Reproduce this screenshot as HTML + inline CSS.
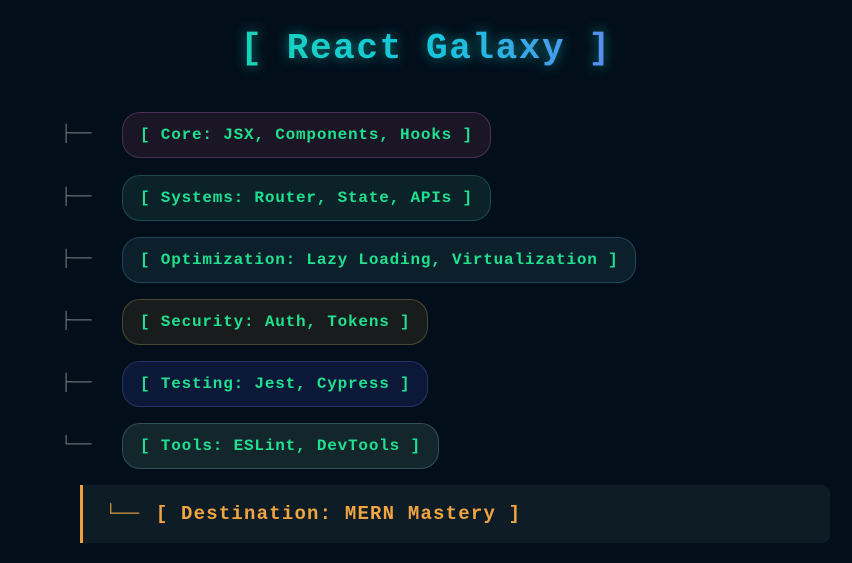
<!DOCTYPE html>
<html><head><style>
html,body{margin:0;padding:0;}
body{width:852px;height:563px;background:#020f1b;font-family:"Liberation Mono",monospace;position:relative;overflow:hidden;}
.title{position:absolute;left:0;width:852px;top:27px;text-align:center;font-size:36px;font-weight:bold;letter-spacing:1.6px;line-height:44px;}
.title span{background:linear-gradient(90deg,#1ad3b8,#12c8dc 50%,#5a8cf0);-webkit-background-clip:text;background-clip:text;color:transparent;filter:drop-shadow(0 0 6px rgba(20,210,200,.55));}
.br{position:absolute;left:61px;color:#6a6f75;font-size:17px;line-height:46px;}
.pill{position:absolute;left:122px;height:44px;border:1px solid;border-radius:18px;box-sizing:content-box;padding:0 17px;color:#1fe08f;font-size:16px;font-weight:bold;letter-spacing:0.8px;line-height:44px;white-space:nowrap;}
.dest{position:absolute;left:80px;top:485px;width:750px;height:58px;background:#0e1c26;border-left:3px solid #eea33a;border-radius:0 8px 8px 0;color:#f0a540;font-size:19px;font-weight:bold;letter-spacing:1.2px;line-height:58px;box-sizing:border-box;padding-left:22px;white-space:nowrap;}
.dest .g{color:#c89040;font-weight:normal;font-size:19px;letter-spacing:0;margin-right:4px;}
</style></head><body>
<div class="title"><span>[ React Galaxy ]</span></div>

<div class="br" style="top:112px">├──</div>
<div class="pill" style="top:112px;background:#1a1626;border-color:#4a3050">[ Core: JSX, Components, Hooks ]</div>

<div class="br" style="top:175px">├──</div>
<div class="pill" style="top:175px;background:#0a2228;border-color:#1d4a50">[ Systems: Router, State, APIs ]</div>

<div class="br" style="top:237px">├──</div>
<div class="pill" style="top:237px;background:#0b202a;border-color:#1f4658">[ Optimization: Lazy Loading, Virtualization ]</div>

<div class="br" style="top:299px">├──</div>
<div class="pill" style="top:299px;background:#181c1c;border-color:#4a4830">[ Security: Auth, Tokens ]</div>

<div class="br" style="top:361px">├──</div>
<div class="pill" style="top:361px;background:#0c1838;border-color:#27326a">[ Testing: Jest, Cypress ]</div>

<div class="br" style="top:423px">└──</div>
<div class="pill" style="top:423px;background:#12262c;border-color:#2f5058">[ Tools: ESLint, DevTools ]</div>

<div class="dest"><span class="g">└──</span> [ Destination: MERN Mastery ]</div>
</body></html>
